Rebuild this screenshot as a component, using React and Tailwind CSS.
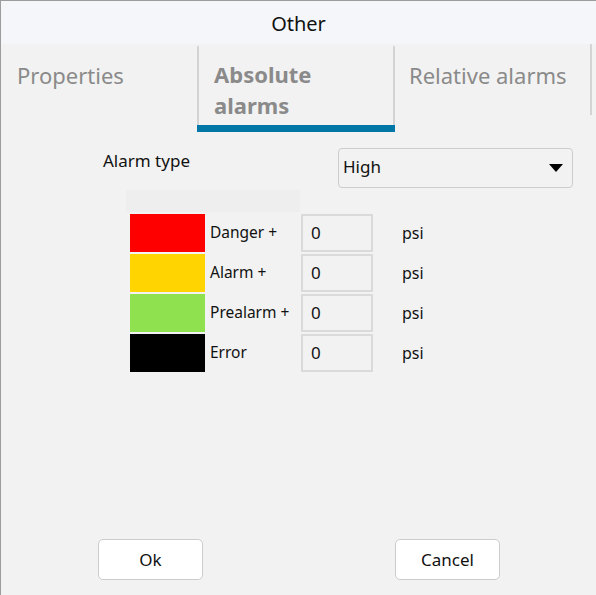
import React from "react";

const rows = [
  { label: "Danger +", color: "bg-[#ff0000]" },
  { label: "Alarm +", color: "bg-[#ffd400]" },
  { label: "Prealarm +", color: "bg-[#8fe14f]" },
  { label: "Error", color: "bg-[#000000]" },
];

export default function App() {
  return (
    <div
      className="w-[596px] h-[595px] flex flex-col bg-[#f2f2f2] border-l border-t border-[#9c9c9c] text-[#111] overflow-hidden"
      style={{ fontFamily: '"Noto Sans", "Open Sans", sans-serif' }}
    >
      {/* title bar */}
      <div className="h-[43px] shrink-0 bg-[#f4f6f9] flex items-center justify-center text-[20px] pt-[2px]">
        Other
      </div>

      {/* tabs */}
      <div className="h-[87px] shrink-0 flex items-start text-[#8a8a8a] text-[22px] leading-[31px]">
        <div className="w-[196px] pl-[16px] pt-[16px]">Properties</div>
        <div className="w-[198px] flex flex-col">
          <div className="h-[79px] mt-[2px] border-l-2 border-r-2 border-[#d4d4d4] pl-[15px] pt-[13px] font-bold">
            Absolute
            <br />
            alarms
          </div>
          <div className="h-[7px] bg-[#0077a6]" />
        </div>
        <div className="w-[197px] h-[71px] border-r-2 border-[#d4d4d4] pl-[14px] pt-[16px]">
          Relative alarms
        </div>
      </div>

      {/* body */}
      <div className="flex-1 flex flex-col">
        <div className="flex items-start mt-[17px]">
          <div className="ml-[102px] w-[235px] text-[17px]">Alarm type</div>
          <div className="w-[235px] h-[40px] rounded-[4px] border border-[#cccccc] bg-[#f2f2f2] flex items-center justify-between pl-[4px] pr-[9px] text-[17px]">
            <span className="mb-[3px]">High</span>
            <svg width="14" height="8" viewBox="0 0 14 8">
              <polygon points="0,0 14,0 7,8" fill="#000" />
            </svg>
          </div>
        </div>

        <div className="ml-[125px] mt-[2px] w-[174px] h-[22px] bg-[#eeeeee]" />

        <div className="flex flex-col gap-[2px] mt-[2px]">
          {rows.map((r) => (
            <div key={r.label} className="flex items-center h-[38px]">
              <div className={`ml-[129px] w-[75px] h-[38px] ${r.color}`} />
              <div className="w-[96px] pl-[5px] text-[15.5px]">{r.label}</div>
              <div className="w-[72px] h-[38px] border-2 border-[#dadada] flex items-center pl-[8px] text-[17px]">
                0
              </div>
              <div className="ml-[29px] text-[16px]">psi</div>
            </div>
          ))}
        </div>

        <div className="flex mt-auto mb-[15px]">
          <button className="ml-[97px] w-[105px] h-[41px] bg-white border border-[#cccccc] rounded-[5px] text-[17px]">
            Ok
          </button>
          <button className="ml-[192px] w-[105px] h-[41px] bg-white border border-[#cccccc] rounded-[5px] text-[17px]">
            Cancel
          </button>
        </div>
      </div>
    </div>
  );
}
